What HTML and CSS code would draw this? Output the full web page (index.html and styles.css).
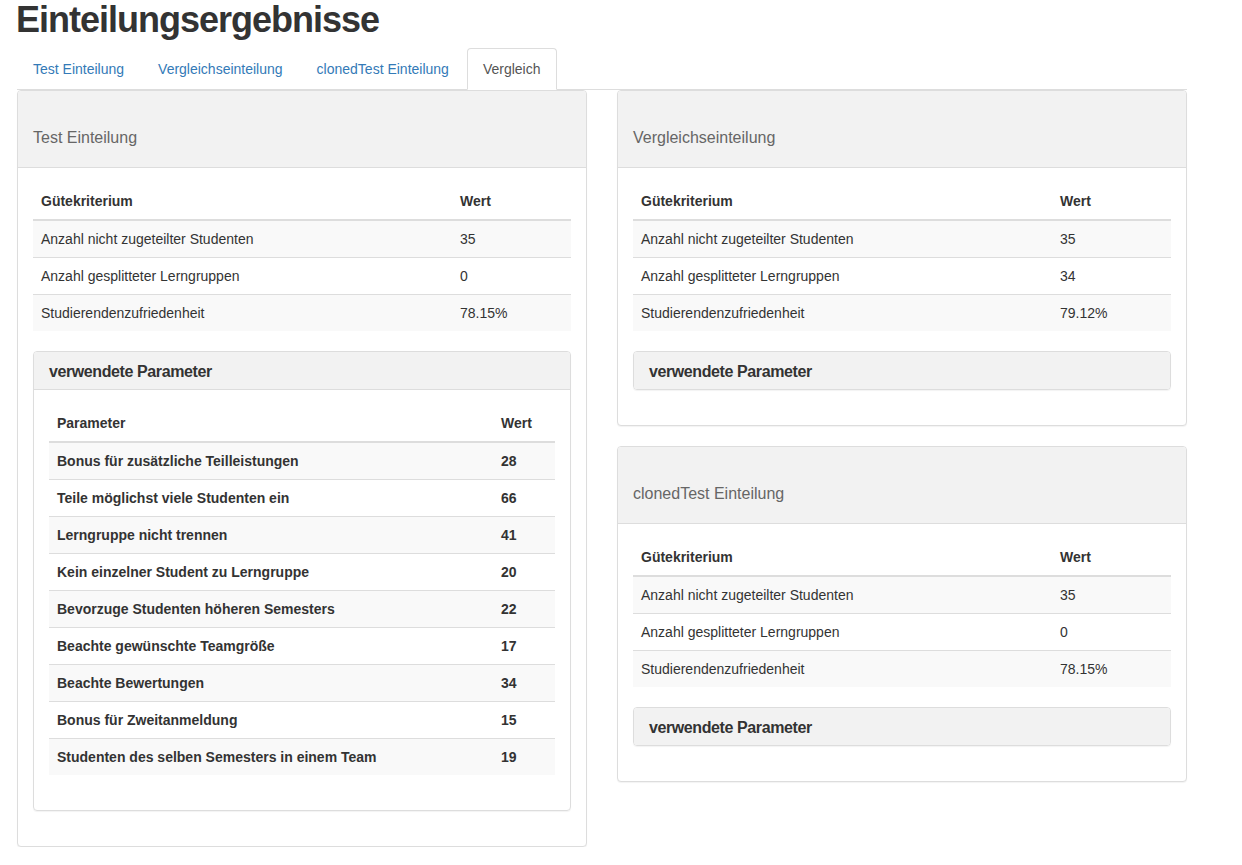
FILE: index.html
```html
<!DOCTYPE html>
<html lang="de">
<head>
<meta charset="utf-8">
<title>Einteilungsergebnisse</title>
<link rel="stylesheet" href="styles.css">
</head>
<body>
<div class="container">
  <h1 class="page-title">Einteilungsergebnisse</h1>
  <ul class="nav-tabs">
    <li><a href="#">Test Einteilung</a></li>
    <li><a href="#">Vergleichseinteilung</a></li>
    <li><a href="#">clonedTest Einteilung</a></li>
    <li class="active"><a href="#">Vergleich</a></li>
  </ul>
  <div class="grid">
    <div class="col">
      <div class="panel">
        <div class="panel-heading"><h3 class="panel-title">Test Einteilung</h3></div>
        <div class="panel-body">
          <table class="table">
            <thead><tr><th class="c-crit">Gütekriterium</th><th>Wert</th></tr></thead>
            <tbody>
              <tr><td>Anzahl nicht zugeteilter Studenten</td><td>35</td></tr>
              <tr><td>Anzahl gesplitteter Lerngruppen</td><td>0</td></tr>
              <tr><td>Studierendenzufriedenheit</td><td>78.15%</td></tr>
            </tbody>
          </table>
          <div class="subpanel">
            <div class="subpanel-heading open">verwendete Parameter</div>
            <div class="panel-body">
              <table class="table params">
                <thead><tr><th class="c-param">Parameter</th><th>Wert</th></tr></thead>
                <tbody>
                  <tr><td>Bonus für zusätzliche Teilleistungen</td><td>28</td></tr>
                  <tr><td>Teile möglichst viele Studenten ein</td><td>66</td></tr>
                  <tr><td>Lerngruppe nicht trennen</td><td>41</td></tr>
                  <tr><td>Kein einzelner Student zu Lerngruppe</td><td>20</td></tr>
                  <tr><td>Bevorzuge Studenten höheren Semesters</td><td>22</td></tr>
                  <tr><td>Beachte gewünschte Teamgröße</td><td>17</td></tr>
                  <tr><td>Beachte Bewertungen</td><td>34</td></tr>
                  <tr><td>Bonus für Zweitanmeldung</td><td>15</td></tr>
                  <tr><td>Studenten des selben Semesters in einem Team</td><td>19</td></tr>
                </tbody>
              </table>
            </div>
          </div>
        </div>
      </div>
    </div>
    <div class="col">
      <div class="panel">
        <div class="panel-heading"><h3 class="panel-title">Vergleichseinteilung</h3></div>
        <div class="panel-body">
          <table class="table">
            <thead><tr><th class="c-crit">Gütekriterium</th><th>Wert</th></tr></thead>
            <tbody>
              <tr><td>Anzahl nicht zugeteilter Studenten</td><td>35</td></tr>
              <tr><td>Anzahl gesplitteter Lerngruppen</td><td>34</td></tr>
              <tr><td>Studierendenzufriedenheit</td><td>79.12%</td></tr>
            </tbody>
          </table>
          <div class="subpanel">
            <div class="subpanel-heading">verwendete Parameter</div>
          </div>
        </div>
      </div>
      <div class="panel">
        <div class="panel-heading"><h3 class="panel-title">clonedTest Einteilung</h3></div>
        <div class="panel-body">
          <table class="table">
            <thead><tr><th class="c-crit">Gütekriterium</th><th>Wert</th></tr></thead>
            <tbody>
              <tr><td>Anzahl nicht zugeteilter Studenten</td><td>35</td></tr>
              <tr><td>Anzahl gesplitteter Lerngruppen</td><td>0</td></tr>
              <tr><td>Studierendenzufriedenheit</td><td>78.15%</td></tr>
            </tbody>
          </table>
          <div class="subpanel">
            <div class="subpanel-heading">verwendete Parameter</div>
          </div>
        </div>
      </div>
    </div>
  </div>
</div>
</body>
</html>
```

FILE: styles.css
```css
* { box-sizing: border-box; }

body {
  margin: 0;
  font-family: "Liberation Sans", Arial, Helvetica, sans-serif;
  font-size: 14px;
  line-height: 20px;
  color: #333;
  background: #fff;
}

.container {
  width: 1187px;
  padding-left: 17px;
}

.page-title {
  margin: 0 0 8px -1px;
  font-size: 36px;
  font-weight: 700;
  letter-spacing: -1px;
  line-height: 40px;
  color: #333;
}

.nav-tabs {
  display: flex;
  margin: 0;
  padding: 0;
  list-style: none;
  border-bottom: 1px solid #ddd;
}

.nav-tabs li {
  margin-bottom: -1px;
}

.nav-tabs a {
  display: block;
  margin-right: 2px;
  padding: 10px 15px;
  line-height: 20px;
  color: #337ab7;
  text-decoration: none;
  border: 1px solid transparent;
  border-radius: 4px 4px 0 0;
}

.nav-tabs .active a {
  color: #555;
  background: #fff;
  border-color: #ddd #ddd transparent;
}

.grid {
  display: grid;
  grid-template-columns: 570px 570px;
  column-gap: 30px;
  align-items: start;
}

.col {
  display: flex;
  flex-direction: column;
  gap: 20px;
}

.panel {
  background: #fff;
  border: 1px solid #ddd;
  border-radius: 4px;
  box-shadow: 0 1px 1px rgba(0, 0, 0, 0.05);
}

.panel-heading {
  padding: 10px 15px;
  background: #f2f2f2;
  border-bottom: 1px solid #ddd;
  border-radius: 3px 3px 0 0;
}

.panel-title {
  margin: 28px 0 10px;
  font-size: 16px;
  font-weight: 400;
  line-height: 1.1;
  color: #666;
}

.panel-body {
  padding: 15px;
}

.table {
  width: 100%;
  margin-bottom: 20px;
  border-collapse: collapse;
  border-spacing: 0;
}

.table th,
.table td {
  padding: 8px;
  line-height: 20px;
  text-align: left;
  vertical-align: top;
}

.table th {
  font-weight: 700;
  vertical-align: bottom;
  border-bottom: 2px solid #ddd;
}

.table td {
  border-top: 1px solid #ddd;
}

.table tbody tr:first-child td {
  border-top: 0;
}

.table tbody tr:nth-child(odd) {
  background: #f9f9f9;
}

.params td {
  font-weight: 700;
}

.c-crit { width: 419px; }
.c-param { width: 444px; }

.subpanel {
  margin-bottom: 20px;
  border: 1px solid #ddd;
  border-radius: 4px;
  box-shadow: 0 1px 1px rgba(0, 0, 0, 0.05);
  overflow: hidden;
}

.subpanel-heading {
  padding: 11px 15px 9px;
  background: #f2f2f2;
  font-size: 16px;
  line-height: 1.1;
  font-weight: 700;
  letter-spacing: -0.4px;
  color: #333;
}

.subpanel-heading.open {
  border-bottom: 1px solid #ddd;
}
```
